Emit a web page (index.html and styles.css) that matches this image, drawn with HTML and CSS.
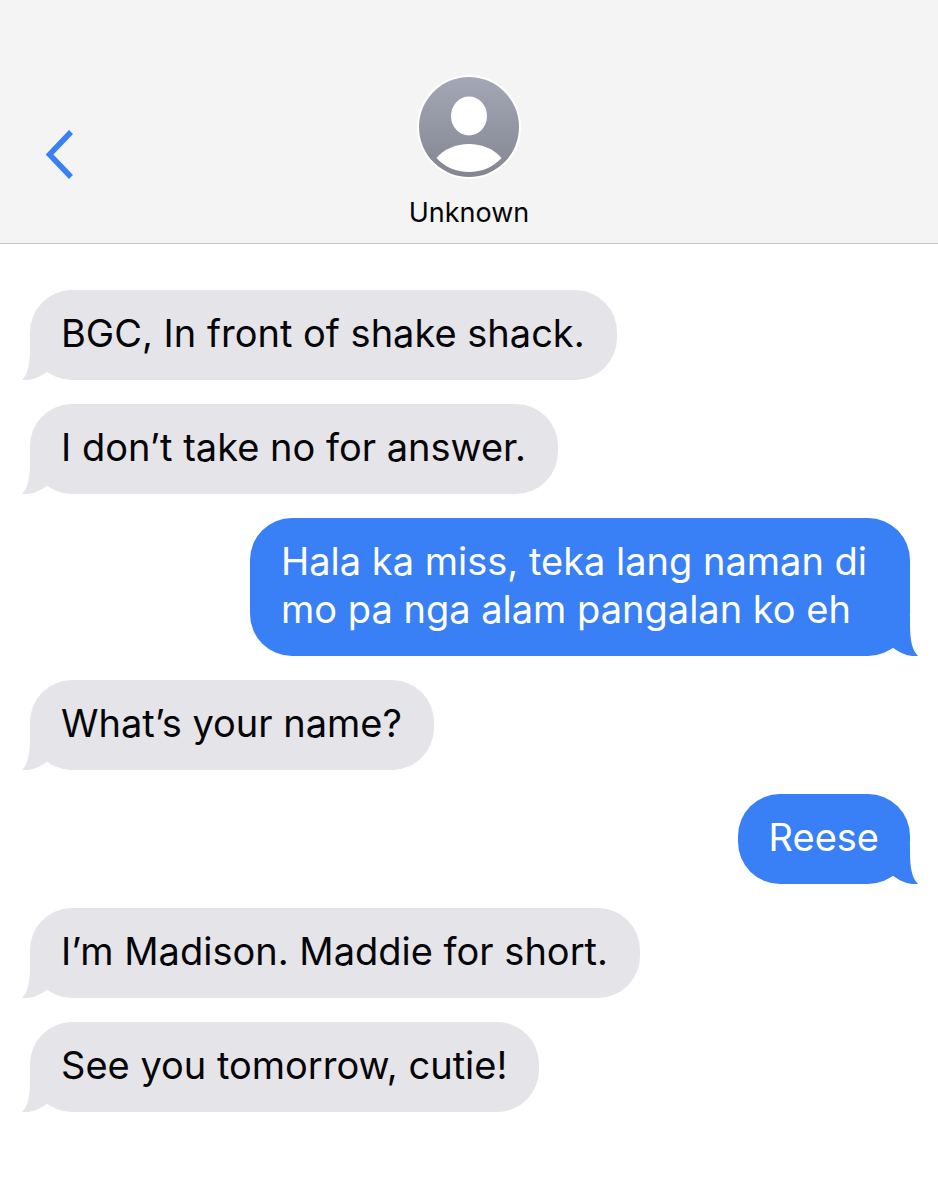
FILE: index.html
```html
<!DOCTYPE html>
<html lang="tl">
<head>
  <meta charset="UTF-8" />
  <title>Messages</title>
  <meta name="viewport" content="width=device-width, initial-scale=1.0" />
  <link rel="stylesheet" href="styles.css">
</head>
<body>

  <!-- tail shared by every bubble, drawn for the left side -->
  <svg class="defs" aria-hidden="true">
    <symbol id="tail" viewBox="0 0 40 40">
      <path d="M8 0V8C8 24 6 34 0 40C10 41 18 37 26 31L40 20V0Z" />
    </symbol>
  </svg>

  <header class="chat-header">
    <button class="back-btn" type="button" aria-label="Back">
      <svg width="30" height="54" viewBox="0 0 30 54">
        <path d="M27 7L5.500 29.500L27 52" fill="none" stroke="currentColor" stroke-width="5.500" />
      </svg>
    </button>
    <div class="contact">
      <svg class="avatar" viewBox="0 0 104 104" aria-hidden="true">
        <defs>
          <linearGradient id="avatarBg" x1="0" y1="0" x2="0" y2="1">
            <stop offset="0" stop-color="#a4a8b6" />
            <stop offset="1" stop-color="#828691" />
          </linearGradient>
        </defs>
        <circle cx="52" cy="52" r="52" fill="#fff" />
        <circle cx="52" cy="52" r="50" fill="url(#avatarBg)" />
        <ellipse cx="52" cy="41" rx="18" ry="19.500" fill="#fff" />
        <path d="M19.500 83C27 74 39 69 52 69S77 74 84.500 83C76 92 65 97 52 97S28 92 19.500 83Z" fill="#fff" />
      </svg>
      <h1 class="name">Unknown</h1>
    </div>
  </header>

  <main class="messages">
    <p class="bubble received">BGC, In front of shake shack.<svg class="tail" aria-hidden="true"><use href="#tail" /></svg></p>
    <p class="bubble received">I don’t take no for answer.<svg class="tail" aria-hidden="true"><use href="#tail" /></svg></p>
    <p class="bubble sent">Hala ka miss, teka lang naman di mo pa nga alam pangalan ko eh<svg class="tail" aria-hidden="true"><use href="#tail" /></svg></p>
    <p class="bubble received">What’s your name?<svg class="tail" aria-hidden="true"><use href="#tail" /></svg></p>
    <p class="bubble sent">Reese<svg class="tail" aria-hidden="true"><use href="#tail" /></svg></p>
    <p class="bubble received">I’m Madison. Maddie for short.<svg class="tail" aria-hidden="true"><use href="#tail" /></svg></p>
    <p class="bubble received">See you tomorrow, cutie!<svg class="tail" aria-hidden="true"><use href="#tail" /></svg></p>
  </main>

</body>

</html>
```
FILE: styles.css
```css
:root {
  --header-bg: #f4f4f5;
  --line: #c4c4c7;
  --received: #e5e4e9;
  --sent: #397ff6;
}

* {
  box-sizing: border-box;
}

body {
  margin: 0;
  font-family: Inter, "Liberation Sans", sans-serif;
  background: #fff;
  color: #060608;
}

.defs {
  display: none;
}

.chat-header {
  display: grid;
  grid-template-columns: 1fr auto 1fr;
  align-items: center;
  padding: 75px 44px 14px;
  background: var(--header-bg);
  border-bottom: 1px solid var(--line);
}

.back-btn {
  justify-self: start;
  padding: 0;
  background: none;
  border: none;
  color: var(--sent);
  cursor: pointer;
}

.back-btn svg {
  display: block;
}

.contact {
  display: flex;
  flex-direction: column;
  align-items: center;
  gap: 18px;
}

.avatar {
  width: 104px;
  height: 104px;
}

.name {
  margin: 0;
  font-size: 27px;
  font-weight: 400;
  line-height: 32px;
}

.messages {
  display: flex;
  flex-direction: column;
  align-items: flex-start;
  gap: 24px;
  padding: 46px 28px 46px 30px;
}

.bubble {
  position: relative;
  max-width: 75%;
  margin: 0;
  padding: 19px 32px 23px 31px;
  border-radius: 42px;
  font-size: 38px;
  line-height: 48px;
}

.received {
  background: var(--received);
}

.sent {
  align-self: flex-end;
  padding-right: 31px;
  background: var(--sent);
  color: #fff;
}

.tail {
  position: absolute;
  bottom: 0;
  left: -8px;
  width: 40px;
  height: 40px;
  fill: var(--received);
}

.sent .tail {
  right: -8px;
  left: auto;
  fill: var(--sent);
  transform: scaleX(-1);
}
```
